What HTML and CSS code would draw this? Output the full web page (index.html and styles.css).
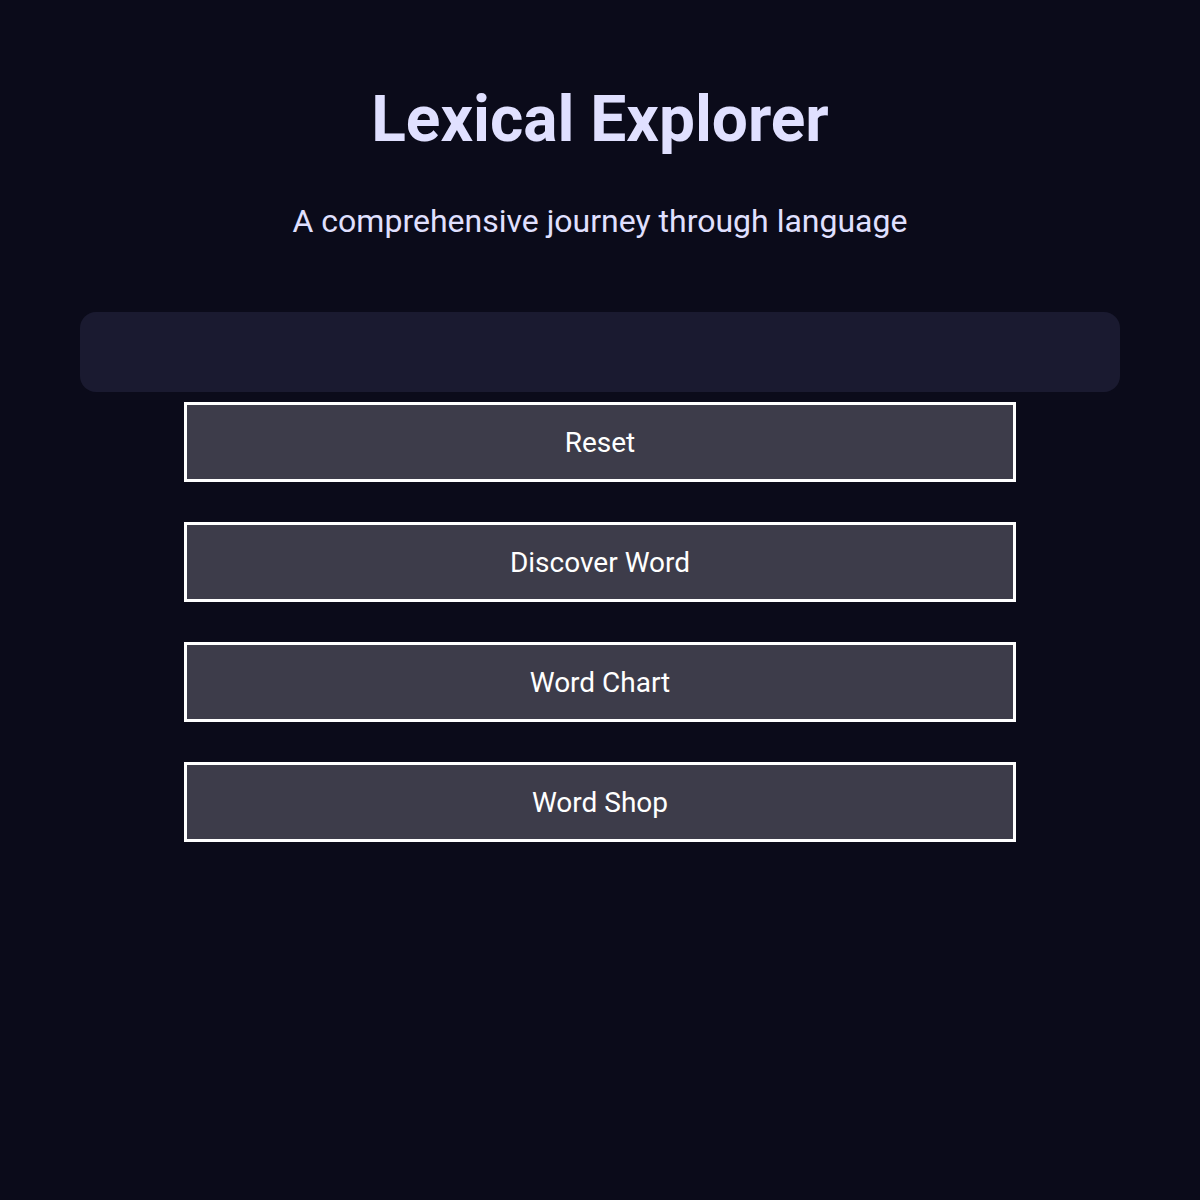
FILE: index.html
```html
<!DOCTYPE html>
<html lang="en">
<head>
<meta charset="utf-8">
<title>Lexical Explorer</title>
<link rel="stylesheet" href="styles.css">
</head>
<body>
<main class="app">
  <header class="hero">
    <h1 class="title">Lexical Explorer</h1>
    <p class="subtitle">A comprehensive journey through language</p>
  </header>
  <section class="panel"></section>
  <nav class="actions">
    <button class="btn">Reset</button>
    <button class="btn">Discover Word</button>
    <button class="btn">Word Chart</button>
    <button class="btn">Word Shop</button>
  </nav>
</main>
</body>
</html>
```
FILE: styles.css
```css
html, body {
  margin: 0;
  padding: 0;
  background: #0b0b1a;
  height: 100%;
}
body {
  font-family: Roboto, "Noto Sans", sans-serif;
  color: #e0e0ff;
}
.app {
  padding: 80px 80px;
}
.hero {
  text-align: center;
}
.title {
  margin: 0;
  font-size: 64px;
  font-weight: 700;
  line-height: 80px;
  color: #e0e0ff;
}
.subtitle {
  margin: 42px 0 0;
  font-size: 32px;
  font-weight: 400;
  line-height: 38px;
  color: #e0e0ff;
}
.panel {
  margin-top: 72px;
  height: 80px;
  background: #1a1a30;
  border-radius: 16px;
}
.actions {
  display: flex;
  flex-direction: column;
  align-items: center;
  gap: 40px;
  margin-top: 10px;
}
.btn {
  width: 80%;
  height: 80px;
  box-sizing: border-box;
  border: 3px solid #ffffff;
  background: #3d3c4a;
  color: #ffffff;
  font-family: Roboto, "Noto Sans", sans-serif;
  font-size: 28px;
  padding: 0;
}
```
